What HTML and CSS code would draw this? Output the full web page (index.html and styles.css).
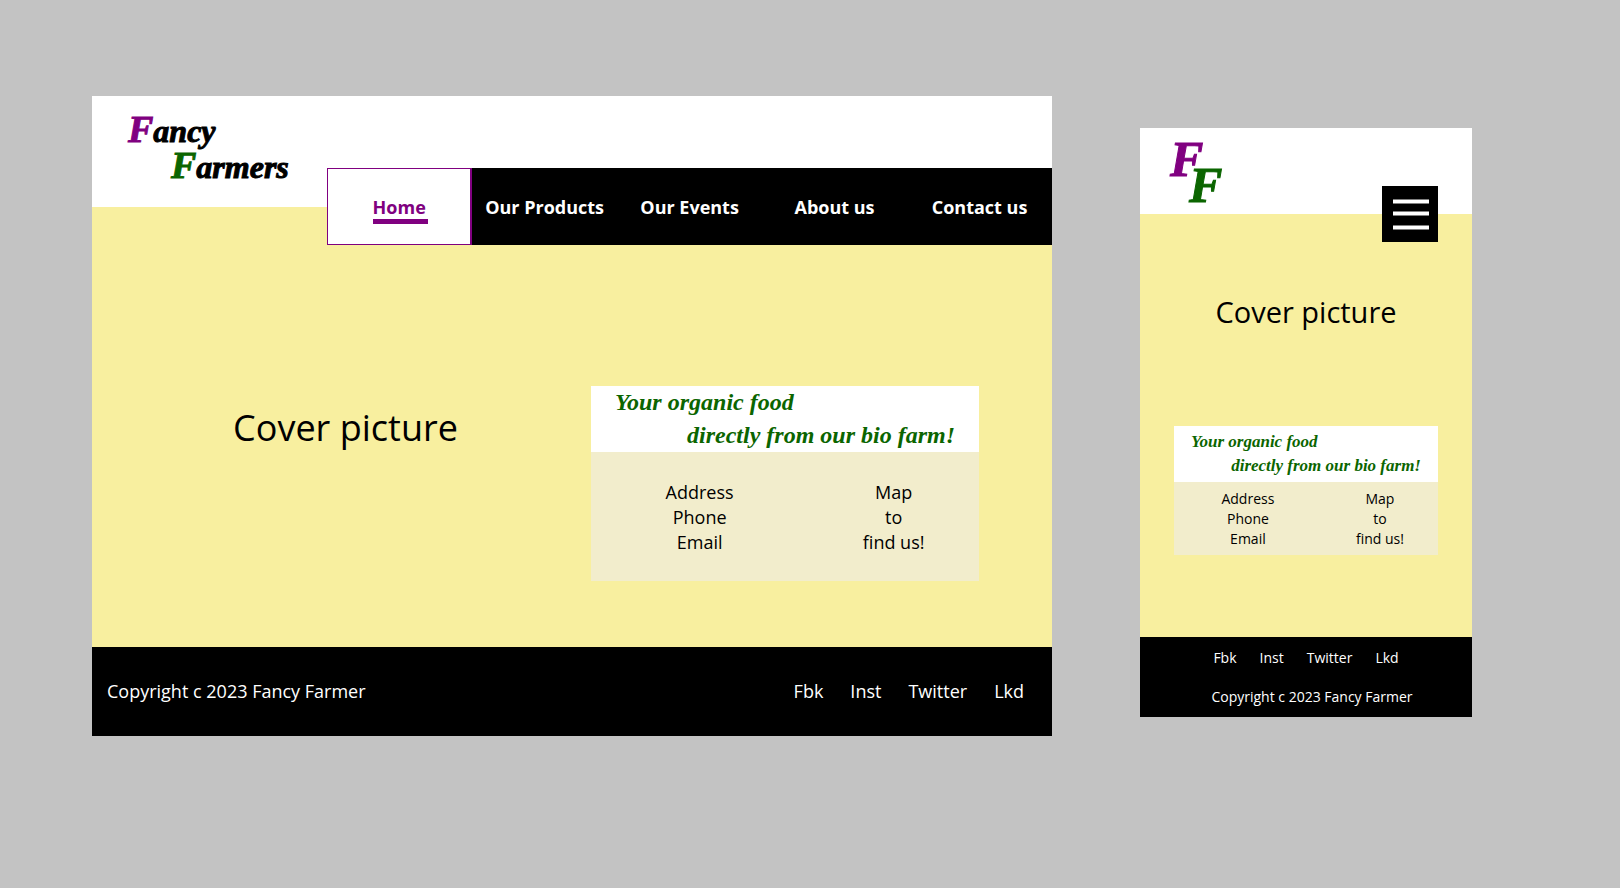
FILE: index.html
```html
<!DOCTYPE html>
<html lang="en">
<head>
<meta charset="utf-8">
<meta name="viewport" content="width=device-width, initial-scale=1">
<title>Fancy Farmers</title>
<link rel="stylesheet" href="styles.css">
</head>
<body>
<div class="boards">
  <section class="board desktop" aria-label="Desktop layout">
    <header class="header">
      <a class="logo" href="#"><span class="logo-line"><span class="initial purple">F</span>ancy</span><span class="logo-line second"><span class="initial green">F</span>armers</span></a>
      <nav class="nav">
        <a class="nav-link active" href="#"><span class="nav-label">Home</span></a>
        <a class="nav-link" href="#">Our Products</a>
        <a class="nav-link" href="#">Our Events</a>
        <a class="nav-link" href="#">About us</a>
        <a class="nav-link" href="#">Contact us</a>
      </nav>
    </header>
    <main class="cover">
      <h1 class="cover-title">Cover picture</h1>
      <article class="card">
        <h2 class="tagline"><span>Your organic food</span><span class="tagline-end">directly from our bio farm!</span></h2>
        <div class="details">
          <p>Address<br>Phone<br>Email</p>
          <p>Map<br>to<br>find us!</p>
        </div>
      </article>
    </main>
    <footer class="footer">
      <p class="copyright">Copyright c 2023 Fancy Farmer</p>
      <div class="social"><a href="#">Fbk</a><a href="#">Inst</a><a href="#">Twitter</a><a href="#">Lkd</a></div>
    </footer>
  </section>

  <section class="board mobile" aria-label="Mobile layout">
    <header class="header">
      <a class="logo" href="#" aria-label="Fancy Farmers"><span class="logo-line purple">F</span><span class="logo-line second green">F</span></a>
      <button class="menu" type="button" aria-label="Menu">
        <svg width="56" height="56" viewBox="0 0 56 56" fill="#fff" aria-hidden="true"><path d="M11 13.500h36v4H11zM11 25.500h36v4H11zM11 39.500h36v4H11z"/></svg>
      </button>
    </header>
    <main class="cover">
      <h1 class="cover-title">Cover picture</h1>
      <article class="card">
        <h2 class="tagline"><span>Your organic food</span><span class="tagline-end">directly from our bio farm!</span></h2>
        <div class="details">
          <p>Address<br>Phone<br>Email</p>
          <p>Map<br>to<br>find us!</p>
        </div>
      </article>
    </main>
    <footer class="footer">
      <div class="social"><a href="#">Fbk</a><a href="#">Inst</a><a href="#">Twitter</a><a href="#">Lkd</a></div>
      <p class="copyright">Copyright c 2023 Fancy Farmer</p>
    </footer>
  </section>
</div>
</body>
</html>
```
FILE: styles.css
```css
* { box-sizing: border-box; }
body {
  margin: 0;
  background: #c3c3c3;
  color: #000;
  font-family: "Open Sans", "Noto Sans", sans-serif;
  font-size: 18px;
}
h1, h2, p { margin: 0; font-weight: 400; }
a { color: inherit; text-decoration: none; }
.purple { color: #800080; }
.green { color: #0b6500; }

.boards {
  display: grid;
  grid-template-columns: 960fr 332fr;
  gap: 88px;
  align-items: start;
  padding: 96px 148px 96px 92px;
}
.header { display: flex; justify-content: space-between; background: #fff; }
.logo {
  display: flex;
  flex-direction: column;
  font-family: "Liberation Serif", serif;
  font-weight: 700;
  font-style: italic;
  -webkit-text-stroke: 1px currentColor;
}
.cover { background: #f8ef9f; }
.tagline {
  display: flex;
  flex-direction: column;
  background: #fff;
  color: #0b6500;
  font-family: "Liberation Serif", serif;
  font-weight: 700;
  font-style: italic;
  white-space: nowrap;
}
.tagline-end { align-self: flex-end; }
.details {
  display: grid;
  grid-template-columns: 56fr 44fr;
  background: #f2edcc;
  text-align: center;
}
.footer { display: flex; background: #000; color: #fff; white-space: nowrap; }
.social { display: flex; }

/* Desktop */
.desktop .header { height: 111px; }
.desktop .logo { padding: 16px 0 0 36px; font-size: 32px; line-height: 34px; }
.desktop .logo-line.second { padding-left: 43px; }
.desktop .initial { font-size: 38px; }
.nav {
  display: grid;
  grid-template-columns: repeat(5, 1fr);
  align-self: flex-end;
  width: 75.5%;
  height: 77px;
  margin-bottom: -38px;
  background: #000;
  color: #fff;
  font-weight: 700;
}
.nav-link { display: flex; align-items: center; justify-content: center; white-space: nowrap; }
.nav-link.active { background: #fff; color: #800080; border: 1px solid #800080; border-right-width: 2px; }
.nav-label { position: relative; }
.nav-label::after {
  content: "";
  position: absolute;
  left: 0;
  right: -2px;
  bottom: -5px;
  height: 5px;
  background: #800080;
}
.desktop .cover {
  display: grid;
  grid-template-columns: 499fr 388fr 73fr;
  align-items: center;
  height: 440px;
}
.desktop .cover-title { padding-left: 8px; font-size: 36px; text-align: center; }
.desktop .card { align-self: end; margin-bottom: 66px; }
.desktop .tagline { padding: 0 24px; font-size: 24px; line-height: 33px; }
.desktop .details { padding: 28px 0 26px; line-height: 25px; }
.desktop .footer { height: 89px; align-items: center; justify-content: space-between; padding: 0 28px 2px 15px; }
.desktop .social { gap: 27px; }

/* Mobile */
.mobile { margin-top: 32px; }
.mobile .header { height: 86px; padding-right: 34px; }
.mobile .logo { padding: 18px 0 0 30px; font-size: 50px; line-height: 26px; }
.mobile .logo-line.second { padding-left: 19px; }
.menu {
  display: grid;
  place-items: center;
  align-self: flex-end;
  width: 56px;
  height: 56px;
  margin-bottom: -28px;
  padding: 0;
  border: 0;
  background: #000;
}
.mobile .cover { padding: 78px 34px 82px; }
.mobile .cover-title { font-size: 29px; line-height: 40px; text-align: center; }
.mobile .card { margin-top: 94px; }
.mobile .tagline { padding: 4px 17px; font-size: 17px; line-height: 24px; }
.mobile .details { padding: 7px 0 6px; font-size: 14px; line-height: 20px; }
.mobile .footer { flex-direction: column; align-items: center; gap: 20px; padding: 11px 0; font-size: 14px; line-height: 19px; }
.mobile .social { gap: 23px; }
.mobile .copyright { padding-left: 12px; }
```
